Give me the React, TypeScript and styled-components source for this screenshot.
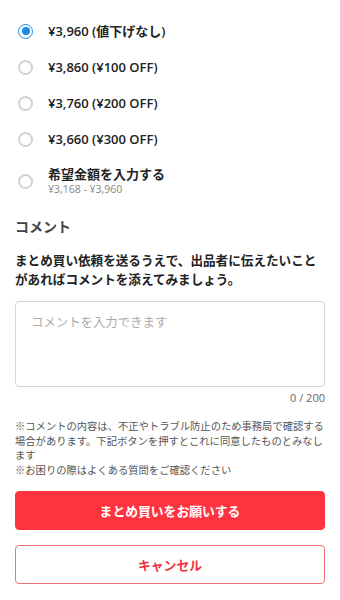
import { useState } from "react";
import styled, { createGlobalStyle } from "styled-components";

const GlobalStyle = createGlobalStyle`
  html, body {
    margin: 0;
    padding: 0;
    background: #fff;
  }
  body {
    font-family: "Open Sans", "Noto Sans CJK JP", sans-serif;
    color: #222;
    -webkit-font-smoothing: antialiased;
  }
  * { box-sizing: border-box; }
`;

const Page = styled.div`
  width: 340px;
  padding: 13px 15px 0;
`;

const OptionList = styled.div`
  display: flex;
  flex-direction: column;
`;

const OptionRow = styled.label<{ $tall?: boolean }>`
  display: flex;
  align-items: center;
  gap: 15px;
  height: ${(p) => (p.$tall ? "auto" : "36px")};
  padding: ${(p) => (p.$tall ? "9px 0 0 3px" : "0 0 0 3px")};
  cursor: pointer;
`;

const Radio = styled.span<{ $checked: boolean }>`
  flex: none;
  width: 15px;
  height: 15px;
  border-radius: 50%;
  border: ${(p) => (p.$checked ? "1.5px solid #1b8de6" : "2px solid #d2d2d2")};
  display: flex;
  align-items: center;
  justify-content: center;
  &::after {
    content: "";
    width: 8px;
    height: 8px;
    border-radius: 50%;
    background: ${(p) => (p.$checked ? "#1b8de6" : "transparent")};
  }
`;

const OptionText = styled.div`
  display: flex;
  flex-direction: column;
`;

const OptionLabel = styled.span`
  font-size: 13px;
  font-weight: 600;
  line-height: 16px;
  color: #222;
`;

const OptionSub = styled.span`
  margin-top: 1px;
  font-size: 10.5px;
  line-height: 13px;
  color: #888;
`;

const Heading = styled.h2`
  margin: 21px 0 0;
  font-size: 14px;
  line-height: 20px;
  font-weight: 700;
  color: #444;
`;

const Lead = styled.p`
  margin: 14px 0 0;
  font-size: 12.6px;
  line-height: 19px;
  font-weight: 700;
  color: #222;
`;

const CommentBox = styled.textarea`
  display: block;
  width: 100%;
  height: 86px;
  margin-top: 12px;
  padding: 12px 15px;
  border: 1px solid #d6d6d6;
  border-radius: 4px;
  resize: none;
  font-family: inherit;
  font-size: 12.4px;
  line-height: 18px;
  color: #222;
  outline: none;
  &::placeholder {
    color: #aaa;
  }
`;

const Counter = styled.div`
  margin-top: 4px;
  text-align: right;
  font-size: 11px;
  line-height: 14px;
  color: #666;
`;

const Notes = styled.div`
  margin-top: 14px;
  font-size: 10.3px;
  line-height: 14.6px;
  color: #555;
`;

const Button = styled.button<{ $primary?: boolean }>`
  display: block;
  width: 100%;
  height: 39px;
  margin-top: ${(p) => (p.$primary ? "14px" : "15px")};
  border-radius: 4px;
  border: 1px solid ${(p) => (p.$primary ? "#ff333f" : "#f0707a")};
  background: ${(p) => (p.$primary ? "#ff333f" : "#fff")};
  color: ${(p) => (p.$primary ? "#fff" : "#f0313d")};
  font-family: inherit;
  font-size: 12.8px;
  font-weight: 700;
  cursor: pointer;
`;

const options = [
  { label: "¥3,960 (値下げなし)" },
  { label: "¥3,860 (¥100 OFF)" },
  { label: "¥3,760 (¥200 OFF)" },
  { label: "¥3,660 (¥300 OFF)" },
  { label: "希望金額を入力する", sub: "¥3,168 - ¥3,960" },
];

export default function App() {
  const [selected, setSelected] = useState(0);
  const [comment, setComment] = useState("");

  return (
    <>
      <GlobalStyle />
      <Page>
        <OptionList>
          {options.map((o, i) => (
            <OptionRow key={i} $tall={!!o.sub} onClick={() => setSelected(i)}>
              <Radio $checked={selected === i} />
              <OptionText>
                <OptionLabel>{o.label}</OptionLabel>
                {o.sub && <OptionSub>{o.sub}</OptionSub>}
              </OptionText>
            </OptionRow>
          ))}
        </OptionList>

        <Heading>コメント</Heading>
        <Lead>
          まとめ買い依頼を送るうえで、出品者に伝えたいことがあればコメントを添えてみましょう。
        </Lead>
        <CommentBox
          placeholder="コメントを入力できます"
          value={comment}
          maxLength={200}
          onChange={(e) => setComment(e.target.value)}
        />
        <Counter>{comment.length} / 200</Counter>

        <Notes>
          ※コメントの内容は、不正やトラブル防止のため事務局で確認する場合があります。下記ボタンを押すとこれに同意したものとみなします
          <br />
          ※お困りの際はよくある質問をご確認ください
        </Notes>

        <Button $primary>まとめ買いをお願いする</Button>
        <Button>キャンセル</Button>
      </Page>
    </>
  );
}
